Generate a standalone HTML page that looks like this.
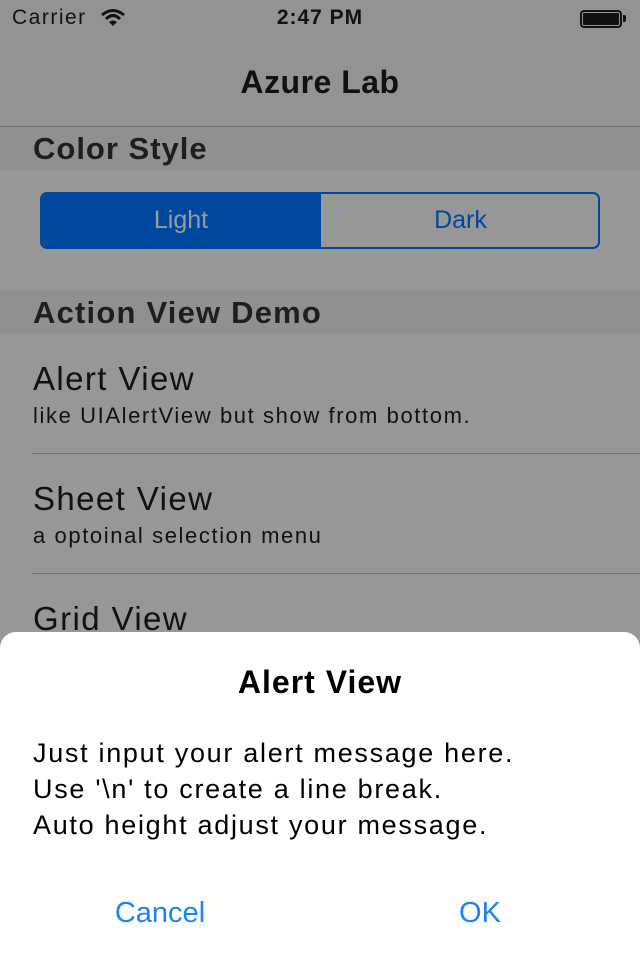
<!DOCTYPE html>
<html><head><style>
*{margin:0;padding:0;box-sizing:border-box}
body{width:640px;height:958px;overflow:hidden;background:#979797;font-family:"Liberation Sans",sans-serif;position:relative;color:#111}
.a{position:absolute;white-space:nowrap}
</style></head><body>
<div class="a" style="left:0;top:0;width:640px;height:127px;background:#939393"></div>
<div class="a" style="left:0;top:126px;width:640px;height:1px;background:#6a6a6a"></div>
<div class="a" style="left:12px;top:6px;font-size:21px;color:#111;letter-spacing:1.5px">Carrier</div>
<svg class="a" style="left:100px;top:8px" width="26" height="20" viewBox="0 0 26 20"><path d="M2 7Q13 -2 24 7" stroke="#111" stroke-width="3" fill="none"/><path d="M6 11Q13 4 20 11" stroke="#111" stroke-width="3" fill="none"/><path d="M9 14L13 18L17 14Q13 11 9 14Z" fill="#111"/></svg>
<div class="a" style="left:0;width:640px;text-align:center;top:6px;font-size:21px;font-weight:bold;color:#111;letter-spacing:1px">2:47 PM</div>
<div class="a" style="left:580px;top:10px;width:42px;height:18px;border:2px solid #111;border-radius:4px;padding:1px"><div style="background:#111;width:100%;height:100%;border-radius:1px"></div></div>
<div class="a" style="left:623px;top:15px;width:3px;height:7px;background:#111;border-radius:0 2px 2px 0"></div>
<div class="a" style="left:0;width:640px;text-align:center;top:64px;font-size:32px;font-weight:bold;color:#111;letter-spacing:0.5px">Azure Lab</div>
<div class="a" style="left:0;top:127px;width:640px;height:43px;background:#909090"></div>
<div class="a" style="left:33px;top:131px;font-size:31px;font-weight:bold;color:#1e1e1e;letter-spacing:1px">Color Style</div>
<div class="a" style="left:40px;top:192px;width:560px;height:57px;border:2px solid #0047a0;border-radius:7px;overflow:hidden">
<div style="position:absolute;left:0;top:0;width:279px;height:100%;background:#0047a0"></div>
<div style="position:absolute;left:0;width:278px;top:12px;text-align:center;font-size:25px;color:#9a9a9a">Light</div>
<div style="position:absolute;left:279px;width:279px;top:12px;text-align:center;font-size:25px;color:#0047a0">Dark</div>
</div>
<div class="a" style="left:0;top:290px;width:640px;height:44px;background:#909090"></div>
<div class="a" style="left:33px;top:295px;font-size:31px;font-weight:bold;color:#1e1e1e;letter-spacing:1.2px">Action View Demo</div>
<div class="a" style="left:33px;top:360px;font-size:33px;letter-spacing:1.4px">Alert View</div>
<div class="a" style="left:33px;top:403px;font-size:22px;letter-spacing:1.6px">like UIAlertView but show from bottom.</div>
<div class="a" style="left:32px;top:453px;width:608px;height:1px;background:#737373"></div>
<div class="a" style="left:33px;top:480px;font-size:33px;letter-spacing:1.4px">Sheet View</div>
<div class="a" style="left:33px;top:523px;font-size:22px;letter-spacing:1.6px">a optoinal selection menu</div>
<div class="a" style="left:32px;top:573px;width:608px;height:1px;background:#737373"></div>
<div class="a" style="left:33px;top:600px;font-size:33px;letter-spacing:1.4px">Grid View</div>
<div class="a" style="left:0;top:632px;width:640px;height:330px;background:#fff;border-radius:16px 16px 0 0"></div>
<div class="a" style="left:0;width:640px;text-align:center;top:664px;font-size:32px;font-weight:bold;color:#000;letter-spacing:1px">Alert View</div>
<div class="a" style="left:33px;top:735px;font-size:27px;line-height:36px;color:#000;letter-spacing:1.7px">Just input your alert message here.<br>Use '\n' to create a line break.<br>Auto height adjust your message.</div>
<div class="a" style="left:0;width:320px;text-align:center;top:897px;font-size:29px;color:#1a82fb">Cancel</div>
<div class="a" style="left:320px;width:320px;text-align:center;top:897px;font-size:29px;color:#1a82fb">OK</div>
</body></html>
